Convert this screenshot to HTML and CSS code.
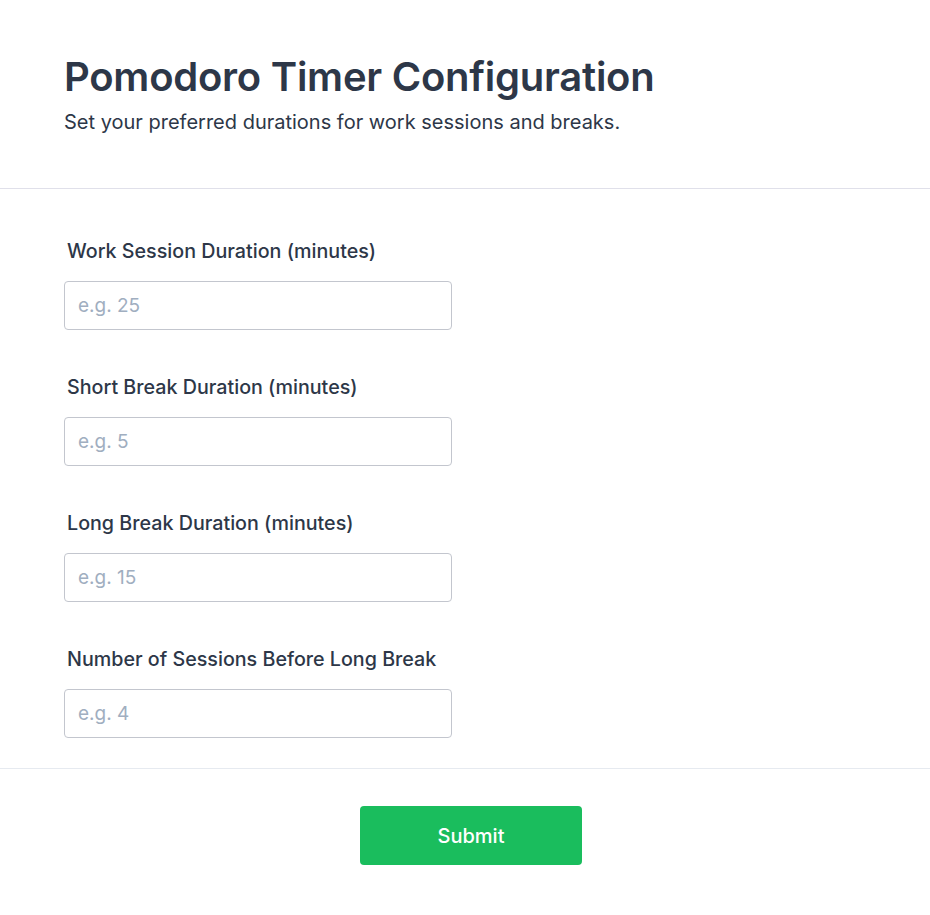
FILE: index.html
```html
<!DOCTYPE html>
<html lang="en">
<head>
<meta charset="utf-8">
<title>Pomodoro Timer Configuration</title>
<link rel="stylesheet" href="styles.css">
</head>
<body>
<div class="page">
  <header class="header">
    <h1 class="title">Pomodoro Timer Configuration</h1>
    <p class="subtitle">Set your preferred durations for work sessions and breaks.</p>
  </header>
  <form class="form">
    <div class="fields">
      <div class="field">
        <label class="label" for="work">Work Session Duration (minutes)</label>
        <input class="input" id="work" type="text" placeholder="e.g. 25">
      </div>
      <div class="field">
        <label class="label" for="short">Short Break Duration (minutes)</label>
        <input class="input" id="short" type="text" placeholder="e.g. 5">
      </div>
      <div class="field">
        <label class="label" for="long">Long Break Duration (minutes)</label>
        <input class="input" id="long" type="text" placeholder="e.g. 15">
      </div>
      <div class="field">
        <label class="label" for="sessions">Number of Sessions Before Long Break</label>
        <input class="input" id="sessions" type="text" placeholder="e.g. 4">
      </div>
    </div>
    <div class="actions">
      <button class="submit" type="button">Submit</button>
    </div>
  </form>
</div>
</body>
</html>
```

FILE: styles.css
```css
* { box-sizing: border-box; }
html, body { margin: 0; padding: 0; background: #ffffff; }
body {
  font-family: Inter, "Noto Sans", "Liberation Sans", sans-serif;
  color: #2d3748;
}
.header {
  padding: 53px 64px 0;
  height: 189px;
  border-bottom: 1px solid #e0e0ea;
}
.title {
  margin: 0;
  font-size: 40px;
  line-height: 48px;
  font-weight: 600;
  letter-spacing: -0.25px;
  color: #2d3748;
}
.subtitle {
  margin: 8px 0 0;
  font-size: 20px;
  line-height: 27px;
  font-weight: 400;
  color: #2d3748;
}
.fields {
  padding: 49px 64px 30px;
  display: flex;
  flex-direction: column;
  gap: 44px;
  border-bottom: 1px solid #e6eaf0;
}
.field {
  display: flex;
  flex-direction: column;
  gap: 16px;
}
.label {
  padding-left: 3px;
  font-size: 19.7px;
  line-height: 27px;
  font-weight: 500;
  color: #2d3748;
}
.input {
  width: 388px;
  height: 49px;
  border: 1px solid #c3c6ce;
  border-radius: 4px;
  padding: 0 13px;
  font-family: inherit;
  font-size: 19px;
  color: #2d3748;
  background: #fff;
  outline: none;
}
.input::placeholder { color: #a0aec0; }
.actions {
  display: flex;
  justify-content: center;
  padding: 37px 0 50px 12px;
}
.submit {
  width: 222px;
  height: 59px;
  border: none;
  border-radius: 4px;
  background: #1abd5d;
  color: #ffffff;
  font-family: inherit;
  font-size: 20px;
  font-weight: 500;
  cursor: pointer;
}
```
